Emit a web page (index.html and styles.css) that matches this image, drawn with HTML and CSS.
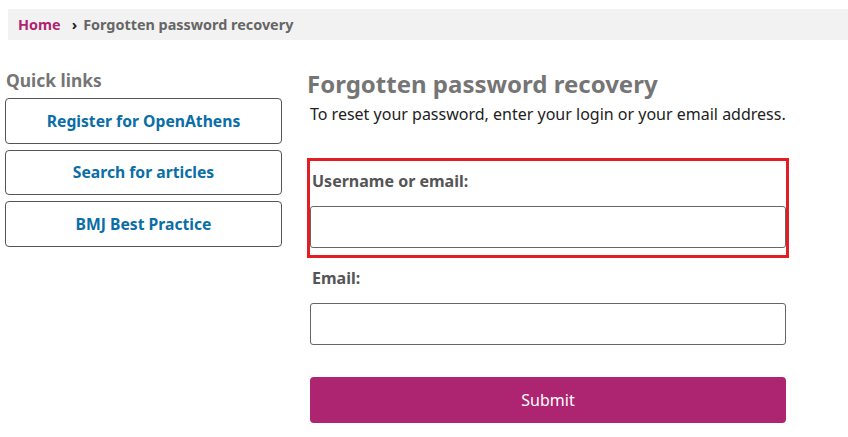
FILE: index.html
```html
<!DOCTYPE html>
<html lang="en">
<head>
    <meta charset="UTF-8">
    <meta name="viewport" content="width=device-width, initial-scale=1.0">
    <title>Forgotten password recovery</title>
    <link rel="stylesheet" href="styles.css">
</head>
<body>
    <nav class="breadcrumb">
        <a href="#" class="crumb-home">Home</a>
        <span class="crumb-sep">&#8250;</span>
        <span class="crumb-current">Forgotten password recovery</span>
    </nav>

    <div class="page">
        <aside class="quick-links">
            <h3>Quick links</h3>
            <a href="#" class="quick-link">Register for OpenAthens</a>
            <a href="#" class="quick-link">Search for articles</a>
            <a href="#" class="quick-link">BMJ Best Practice</a>
        </aside>

        <main class="content">
            <h1>Forgotten password recovery</h1>
            <p class="intro">To reset your password, enter your login or your email address.</p>

            <form class="recovery-form" onsubmit="return false;">
                <div class="form-group has-error">
                    <label for="username">Username or email:</label>
                    <input type="text" id="username">
                </div>
                <div class="form-group">
                    <label for="email">Email:</label>
                    <input type="email" id="email">
                </div>
                <button type="submit" class="submit-button">Submit</button>
            </form>
        </main>
    </div>
</body>
</html>
```

FILE: styles.css
```css
body {
    font-family: "Noto Sans", "Open Sans", Arial, sans-serif;
    margin: 0;
    background-color: #ffffff;
    color: #222;
}
.breadcrumb {
    margin: 9px 0 0 8px;
    height: 31px;
    background-color: #f2f2f2;
    display: flex;
    align-items: center;
    padding-left: 10px;
    font-size: 14.4px;
    font-weight: bold;
}
.crumb-home {
    color: #b0246f;
    text-decoration: none;
}
.crumb-sep {
    color: #222;
    margin: 0 6px 0 11px;
    font-size: 15px;
    position: relative;
    top: -1px;
}
.crumb-current {
    color: #666;
}
.page {
    display: grid;
    grid-template-columns: 277px 483px;
    column-gap: 25px;
    padding-left: 5px;
    margin-top: 27px;
}
.quick-links h3 {
    font-size: 17.4px;
    color: #757575;
    margin: 2px 0 6px 1px;
    line-height: 23px;
}
.quick-link {
    display: flex;
    align-items: center;
    justify-content: center;
    height: 43.5px;
    border: 1px solid #555;
    border-radius: 4px;
    margin-bottom: 6px;
    color: #0b6ea6;
    font-weight: bold;
    font-size: 15.7px;
    text-decoration: none;
}
.content h1 {
    font-size: 24px;
    color: #757575;
    margin: 2px 0 0 0;
    line-height: 30px;
}
.intro {
    font-size: 16px;
    margin: 4px 0 0 3px;
    line-height: 22px;
}
.recovery-form {
    margin-top: 33px;
    width: 482px;
}
.form-group {
    border: 3px solid transparent;
    padding: 7px 0 6px 0;
}
.form-group.has-error {
    border-color: #e21d24;
    padding: 10px 0 7px 0;
}
.form-group label {
    display: block;
    font-size: 16px;
    font-weight: bold;
    color: #555;
    line-height: 20px;
    margin-left: 2px;
    margin-bottom: 15px;
}
.form-group input {
    display: block;
    box-sizing: border-box;
    width: 100%;
    height: 42px;
    border: 1px solid #666;
    border-radius: 3px;
    padding: 0 10px;
    font-family: inherit;
    font-size: 15px;
}
.submit-button {
    display: block;
    width: 476px;
    margin: 23px 0 0 3px;
    height: 46px;
    border: none;
    border-radius: 4px;
    background-color: #ad2470;
    color: white;
    font-family: inherit;
    font-size: 16px;
    cursor: pointer;
}
.submit-button:hover {
    background-color: #96205f;
}
```
